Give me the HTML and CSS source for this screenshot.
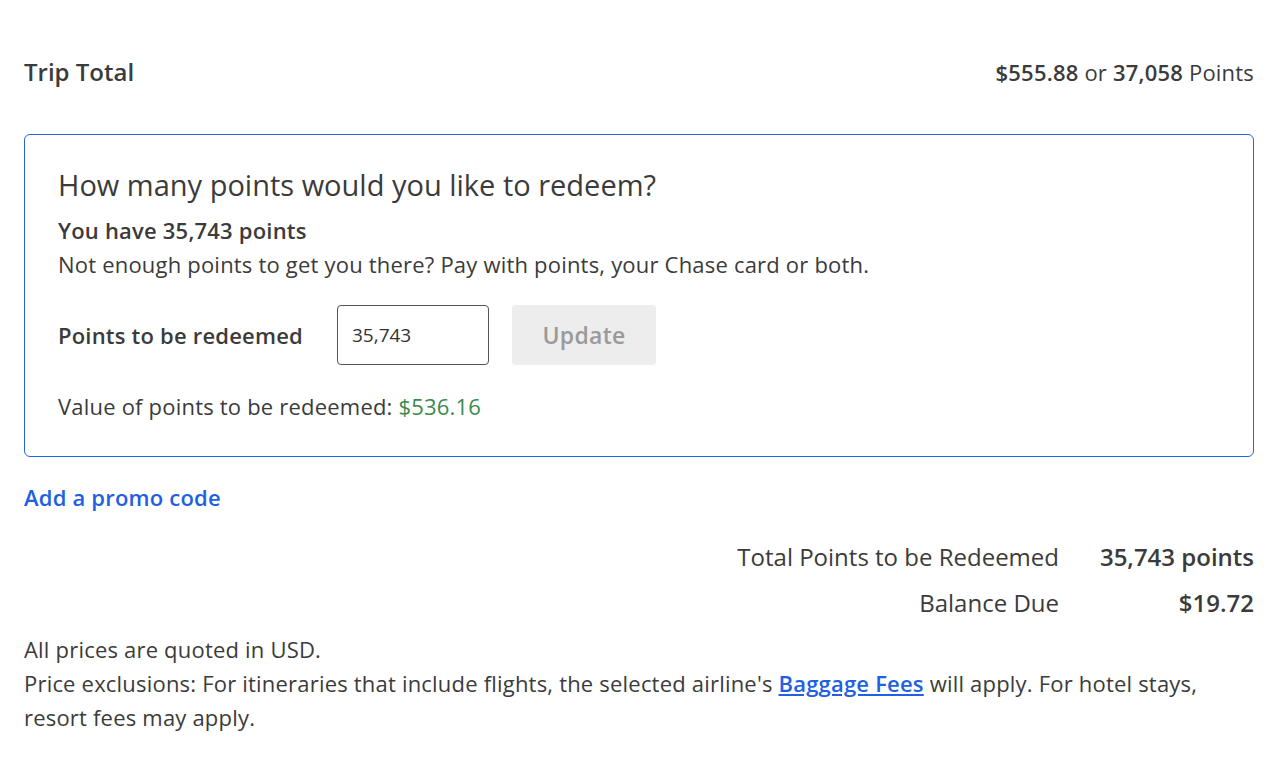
FILE: index.html
```html
<!DOCTYPE html>
<html lang="en">
<head>
<meta charset="utf-8">
<title>Trip Total</title>
<link rel="stylesheet" href="styles.css">
</head>
<body>
<main class="page">
  <div class="trip-total">
    <h2 class="trip-title">Trip Total</h2>
    <div class="trip-price"><b>$555.88</b> or <b>37,058</b> Points</div>
  </div>

  <section class="redeem">
    <h3 class="redeem-title">How many points would you like to redeem?</h3>
    <p class="have">You have 35,743 points</p>
    <p class="note">Not enough points to get you there? Pay with points, your Chase card or both.</p>
    <div class="points-row">
      <label class="points-label" for="pts">Points to be redeemed</label>
      <input id="pts" class="points-input" type="text" value="35,743">
      <button class="update-btn" type="button">Update</button>
    </div>
    <p class="value">Value of points to be redeemed: <span class="green">$536.16</span></p>
  </section>

  <a class="promo" href="#">Add a promo code</a>

  <div class="summary">
    <div class="sum-row"><span class="sum-label">Total Points to be Redeemed</span><span class="sum-value">35,743 points</span></div>
    <div class="sum-row"><span class="sum-label">Balance Due</span><span class="sum-value">$19.72</span></div>
  </div>

  <div class="footer">
    <p>All prices are quoted in USD.</p>
    <p>Price exclusions: For itineraries that include flights, the selected airline's <a href="#" class="fees">Baggage Fees</a> will apply. For hotel stays, resort fees may apply.</p>
  </div>
</main>
</body>
</html>
```

FILE: styles.css
```css
* { box-sizing: border-box; }
html, body { margin: 0; padding: 0; background: #fff; }
body {
  font-family: "Open Sans", "Noto Sans", sans-serif;
  color: #3b3b3b;
  font-size: 22px;
  letter-spacing: 0.2px;
}
.page {
  padding: 51px 26px 0 24px;
}
p { margin: 0; }
.trip-total {
  display: flex;
  justify-content: space-between;
  align-items: center;
  height: 41px;
}
.trip-title {
  margin: 0;
  font-size: 24px;
  font-weight: 600;
  letter-spacing: 0;
}
.trip-price b { font-weight: 600; }
.redeem {
  margin-top: 42px;
  border: 1px solid #2463e6;
  border-radius: 6px;
  padding: 30px 33px 33px 33px;
}
.redeem-title {
  margin: 0;
  font-size: 29px;
  font-weight: 400;
  line-height: 40px;
  letter-spacing: 0;
}
.have {
  font-weight: 600;
  line-height: 34px;
  margin-top: 8px;
}
.note { line-height: 34px; }
.points-row {
  display: flex;
  align-items: center;
  margin-top: 24px;
}
.points-label {
  font-weight: 600;
  width: 279px;
}
.points-input {
  width: 152px;
  height: 60px;
  border: 1px solid #555;
  border-radius: 4px;
  padding: 0 14px;
  font-family: "Open Sans", sans-serif;
  font-size: 19px;
  color: #333;
}
.update-btn {
  margin-left: 23px;
  width: 144px;
  height: 60px;
  border: none;
  border-radius: 4px;
  background: #ededed;
  color: #9a9a9a;
  font-family: "Open Sans", sans-serif;
  font-size: 23px;
  font-weight: 600;
  letter-spacing: 0.3px;
}
.value {
  margin-top: 24px;
  line-height: 34px;
}
.green { color: #3c8a4e; }
.promo {
  display: inline-block;
  margin-top: 23px;
  color: #2160e3;
  font-weight: 600;
  text-decoration: none;
  line-height: 34px;
}
.summary {
  margin-top: 26px;
  display: flex;
  flex-direction: column;
  gap: 12px;
  font-size: 24px;
  letter-spacing: 0;
}
.sum-row {
  display: flex;
  justify-content: flex-end;
  line-height: 34px;
}
.sum-label { text-align: right; }
.sum-value {
  width: 195px;
  text-align: right;
  font-weight: 600;
}
.footer {
  margin-top: 12px;
  line-height: 34px;
}
.fees {
  color: #2160e3;
  font-weight: 600;
  text-decoration: underline;
}
```
